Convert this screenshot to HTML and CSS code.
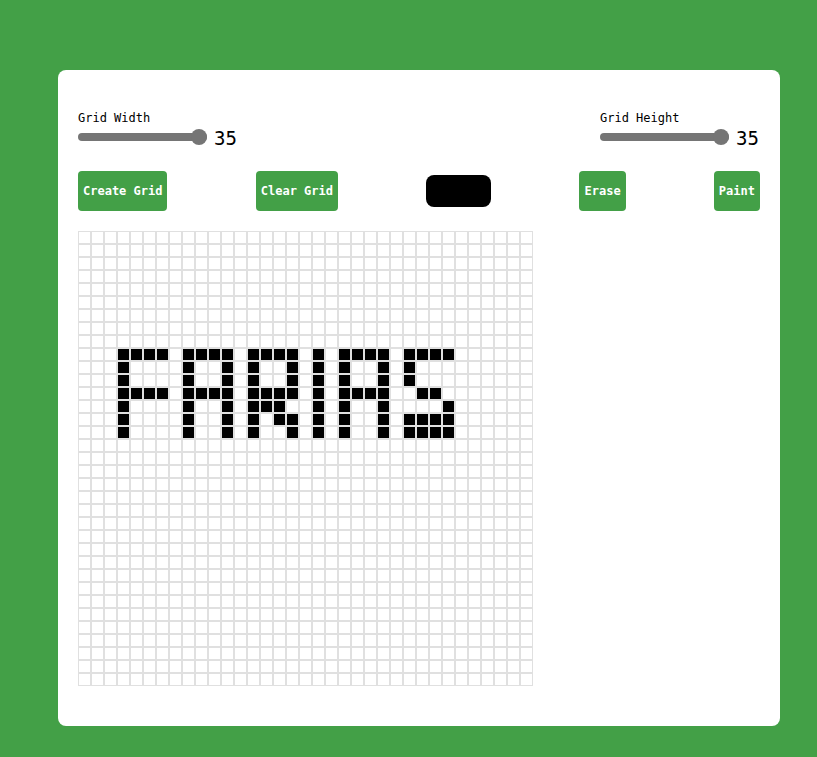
FILE: index.html
```html
<!DOCTYPE html>
<html lang="en">
<head>
<meta charset="utf-8">
<title>Pixel Art Maker</title>
<link rel="stylesheet" href="styles.css">
</head>
<body>
<main class="card">
  <section class="sizes">
    <div class="size-group">
      <label class="size-label" for="width">Grid Width</label>
      <div class="size-row">
        <input class="slider" id="width" type="range" min="1" max="35" value="35">
        <span class="size-value">35</span>
      </div>
    </div>
    <div class="size-group">
      <label class="size-label" for="height">Grid Height</label>
      <div class="size-row">
        <input class="slider" id="height" type="range" min="1" max="35" value="35">
        <span class="size-value">35</span>
      </div>
    </div>
  </section>
  <section class="actions">
    <button class="btn">Create Grid</button>
    <button class="btn">Clear Grid</button>
    <input class="color" type="color" value="#000000">
    <button class="btn">Erase</button>
    <button class="btn">Paint</button>
  </section>
  <div class="grid" id="grid"></div>
</main>
<script src="script.js"></script>
</body>
</html>
```
FILE: styles.css
```css
* { box-sizing: border-box; }
html, body { margin: 0; padding: 0; }
body {
  background: #43a047;
  font-family: "DejaVu Sans Mono", "Liberation Mono", monospace;
  color: #000;
  min-height: 757px;
  padding: 70px 0 31px 58px;
}
.card {
  width: 722px;
  background: #fff;
  border-radius: 8px;
  padding: 41px 20px 40px 20px;
}
.sizes {
  display: flex;
  justify-content: space-between;
}
.size-group {
  display: flex;
  flex-direction: column;
}
.size-label {
  font-size: 12px;
  line-height: 15px;
  height: 15px;
}
.size-row {
  display: flex;
  align-items: center;
  gap: 7px;
  height: 22px;
}
.size-value {
  font-size: 19px;
  line-height: 22px;
  padding-top: 2px;
  min-width: 24px;
}
.slider {
  -webkit-appearance: none;
  appearance: none;
  width: 129px;
  height: 8px;
  margin: 0;
  border-radius: 4px;
  background: #757575;
  outline: none;
}
.slider::-webkit-slider-thumb {
  -webkit-appearance: none;
  appearance: none;
  width: 16px;
  height: 16px;
  border-radius: 50%;
  background: #757575;
  border: none;
}
.actions {
  display: flex;
  justify-content: space-between;
  align-items: center;
  margin-top: 23px;
  height: 40px;
}
.btn {
  height: 40px;
  padding: 0 5px;
  border: none;
  border-radius: 4px;
  background: #43a047;
  color: #fff;
  font-family: "DejaVu Sans Mono", "Liberation Mono", monospace;
  font-weight: bold;
  font-size: 12px;
}
.color {
  -webkit-appearance: none;
  appearance: none;
  width: 65px;
  height: 32px;
  padding: 0;
  border: none;
  background: transparent;
}
.color::-webkit-color-swatch-wrapper { padding: 0; }
.color::-webkit-color-swatch { border: none; border-radius: 8px; }
.grid {
  display: grid;
  grid-template-columns: repeat(35, 13px);
  grid-auto-rows: 13px;
  margin-top: 20px;
  width: 455px;
}
.cell {
  border: 1px solid #e0e0e0;
  background: #fff;
}
.cell.on { background: #000; }
```
FILE: script.js
```js
var filled = {
  9:  [3,4,5,6, 8,9,10,11, 13,14,15,16, 18, 20,21,22,23, 25,26,27,28],
  10: [3, 8,11, 13,16, 18, 20,23, 25],
  11: [3, 8,11, 13,16, 18, 20,23, 25],
  12: [3,4,5,6, 8,9,10,11, 13,14,15,16, 18, 20,21,22,23, 26,27],
  13: [3, 8,11, 13,14,15, 18, 20,23, 28],
  14: [3, 8,11, 13,15,16, 18, 20,23, 25,26,27,28],
  15: [3, 8,11, 13,16, 18, 20,23, 25,26,27,28]
};
var grid = document.getElementById('grid');
var frag = document.createDocumentFragment();
for (var r = 0; r < 35; r++) {
  for (var c = 0; c < 35; c++) {
    var d = document.createElement('div');
    d.className = 'cell';
    if (filled[r] && filled[r].indexOf(c) !== -1) d.className += ' on';
    frag.appendChild(d);
  }
}
grid.appendChild(frag);
```
